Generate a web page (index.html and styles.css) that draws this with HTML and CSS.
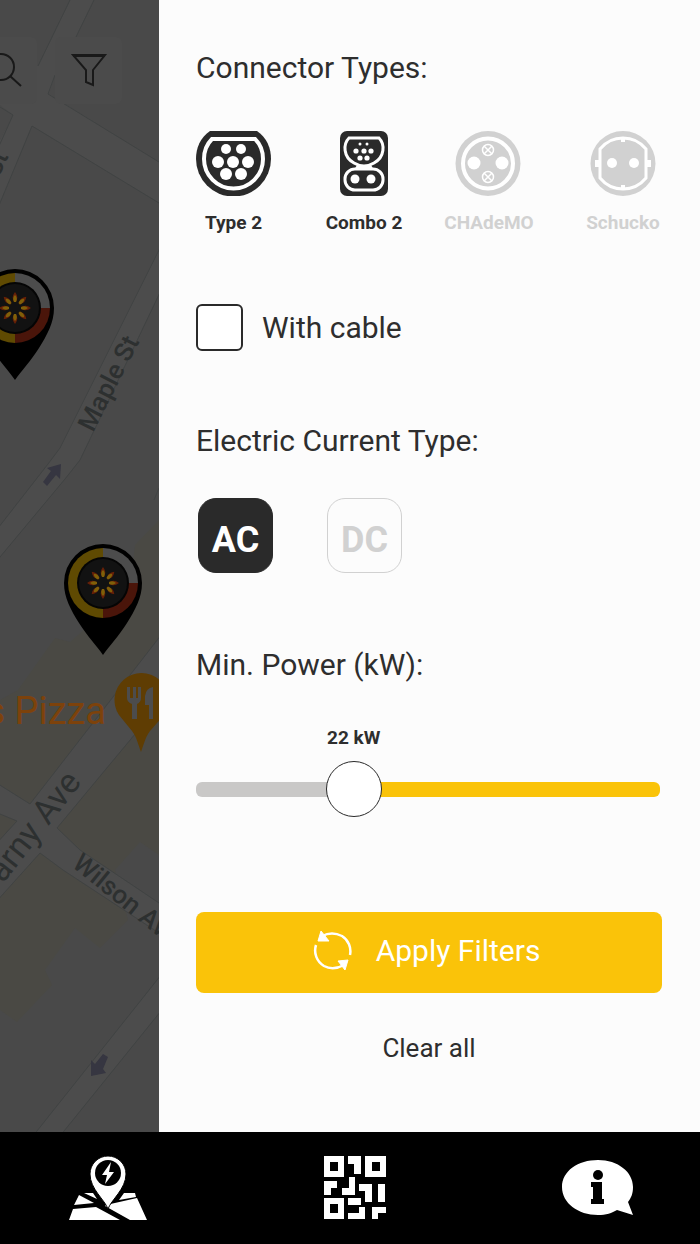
FILE: index.html
```html
<!DOCTYPE html>
<html lang="en">
<head>
<meta charset="utf-8">
<meta name="viewport" content="width=device-width, initial-scale=1">
<title>Charging station filters</title>
<link rel="stylesheet" href="styles.css">
</head>
<body>
<div class="app">
  <main class="main">
    <section class="map" aria-label="Map">
      <svg class="map-canvas" viewBox="0 0 159 1132" preserveAspectRatio="xMinYMin slice">
        <defs>
          <g id="petal"><path d="M0-16Q3-12 2-9L1-6H-1L-2-9Q-3-12 0-16Z" fill="#672007"/><path d="M0-13Q3-10 1-6H-1Q-3-10 0-13Z" fill="#806009"/></g>
          <g id="station">
            <path d="M0 72C-7 62-15 54-24 40C-32 27-39 15-39 0A39 39 0 0 1 39 0C39 15 32 27 24 40C15 54 7 62 0 72Z" fill="#000"/>
            <path d="M0-35A35 35 0 0 0 0 35Z" fill="#5f4a02"/>
            <path d="M0 35A35 35 0 0 0 35 0H0Z" fill="#4a150a"/>
            <path d="M0-35A35 35 0 0 1 35 0H0Z" fill="#4c4c4c"/>
            <circle r="26" fill="#050505"/><circle r="24" fill="#121212"/>
            <use href="#petal"/><use href="#petal" transform="rotate(45)"/><use href="#petal" transform="rotate(90)"/><use href="#petal" transform="rotate(135)"/><use href="#petal" transform="rotate(180)"/><use href="#petal" transform="rotate(225)"/><use href="#petal" transform="rotate(270)"/><use href="#petal" transform="rotate(315)"/>
          </g>
        </defs>
        <rect width="159" height="1132" fill="#494949"/>
        <path d="M159 520L135 545L130 590L70 642L55 638L18 690L0 700V1010L17 1022L52 985L45 970L75 928L100 948L128 920L115 870L140 842L159 855Z" fill="#4a4944"/>
        <g fill="#4c4c4c" stroke="#404343">
          <path d="M70 0L38 66L0 50V105L13 115L-5 150V215L32 126L159 203V162L49 94L55 75L76 37L94 0Z" stroke="none"/>
          <path fill="none" d="M70 0L38 66M94 0L76 37M55 75L48 94L159 162M0 107L13 115L-5 155M-5 215L32 126L159 203M159 488L154 500"/>
          <path d="M165 238L60 448L48 464L-5 532V563L65 479L80 460L165 282Z"/>
          <path d="M165 630L30 804L-5 782V812L17 821L-5 845V903L40 853L63 870L165 937V907L80 850L57 828L165 698Z"/>
          <path d="M165 970L33 1136H60L165 1006Z"/>
        </g>
        <g class="map-label">
          <text x="-11" y="197" transform="rotate(-64 -11 197)">n St</text>
          <text x="93" y="433" transform="rotate(-63 93 433)">Maple St</text>
          <text class="map-label-large" x="3" y="884" transform="rotate(-52 3 884)">arny Ave</text>
          <text x="71" y="866" transform="rotate(39 71 866)">Wilson Ave</text>
        </g>
        <g fill="#363641">
          <path d="M43 482L51 471L47 468L61 464L60 479L56 475L47 486Z"/>
          <path d="M108 1057L103 1069L106 1073L91 1076L91 1060L95 1064L103 1054Z"/>
        </g>
        <text class="map-place" x="106" y="724">s Pizza</text>
        <path d="M141 752C138 744 137 738 132 731L119 715A27 27 0 1 1 164 715L150 731C145 738 144 744 141 752Z" fill="#5f3d03"/>
        <path d="M127 687H130V698H133V687H136V698H138V687H141V698Q141 702 137 704V719H132V704Q127 702 127 698ZM153 687V719H149V705H145V696Q146 688 153 687Z" fill="#4c4c4c"/>
        <use href="#station" transform="translate(15 308)"/>
        <use href="#station" transform="translate(103 583)"/>
      </svg>
      <div class="map-tools">
        <button class="map-button" type="button" aria-label="Search"><svg viewBox="0 0 67 67" fill="none" stroke="#191919" stroke-width="2"><circle cx="31" cy="30" r="13"/><path d="M40 39L51 49"/></svg></button>
        <button class="map-button" type="button" aria-label="Filter"><svg viewBox="0 0 67 67" fill="none" stroke="#191919" stroke-width="2"><path d="M18 18H50L38 33V48L31 45V33Z"/><path d="M18 19H50"/></svg></button>
      </div>
    </section>

    <form class="panel">
      <h2 class="heading">Connector Types:</h2>
      <div class="connectors">
        <button class="connector" type="button" aria-pressed="true">
          <svg class="connector-icon" viewBox="0 0 75 65">
            <path d="M14 0H61C71 7 75 17 75 28A37 37 0 0 1 0 28C0 17 4 7 14 0Z" fill="#2a2a2a"/>
            <path d="M16 8H59Q67 16 67 28A29 29 0 0 1 8 28Q8 16 16 8Z" fill="none" stroke="#fff" stroke-width="4"/>
            <g fill="#fff"><circle cx="30" cy="18" r="5"/><circle cx="45" cy="18" r="5"/><circle cx="22" cy="31" r="6"/><circle cx="37" cy="31" r="6"/><circle cx="52" cy="31" r="6"/><circle cx="30" cy="43" r="6"/><circle cx="45" cy="43" r="6"/></g>
          </svg>
          <span>Type 2</span>
        </button>
        <button class="connector" type="button" aria-pressed="true">
          <svg class="connector-icon" viewBox="0 0 75 65">
            <rect x="13" width="48" height="65" rx="7" fill="#2a2a2a"/>
            <g fill="none" stroke="#fff" stroke-width="3"><path d="M22 7H52C58 13 58 26 47 32Q37 38 27 32C16 26 16 13 22 7Z"/><rect x="18" y="38" width="38" height="21" rx="10"/></g>
            <path d="M30 34H44L47 39H27Z" fill="#fff"/>
            <g fill="#fff"><circle cx="33" cy="13" r="1.500"/><circle cx="40" cy="13" r="1.500"/><circle cx="29" cy="20" r="2.600"/><circle cx="37" cy="20" r="2.600"/><circle cx="44" cy="20" r="2.600"/><circle cx="33" cy="27" r="2.600"/><circle cx="40" cy="27" r="2.600"/><circle cx="28" cy="48" r="4.500"/><circle cx="44" cy="48" r="4.500"/></g>
          </svg>
          <span>Combo 2</span>
        </button>
        <button class="connector" type="button" aria-pressed="false">
          <svg class="connector-icon" viewBox="0 0 75 65">
            <circle cx="36" cy="32.500" r="32.500" fill="#d1d1d1"/>
            <circle cx="36" cy="32.500" r="25" fill="none" stroke="#fff" stroke-width="4"/>
            <g fill="#fff"><circle cx="22" cy="32" r="6.500"/><circle cx="50" cy="32" r="6.500"/></g>
            <g fill="none" stroke="#fff" stroke-width="1.500"><circle cx="36" cy="19" r="5.500"/><circle cx="36" cy="46" r="5.500"/><path d="M32 15L40 23M40 15L32 23M32 42L40 50M40 42L32 50"/></g>
          </svg>
          <span>CHAdeMO</span>
        </button>
        <button class="connector" type="button" aria-pressed="false">
          <svg class="connector-icon" viewBox="0 0 75 65">
            <circle cx="37" cy="32.500" r="32.500" fill="#d1d1d1"/>
            <path d="M14 18Q23 7 37 7T60 18V47Q51 58 37 58T14 47Z" fill="none" stroke="#fff" stroke-width="3"/>
            <path d="M9 29H14V36H9ZM60 29H65V36H60ZM35 6H39V11H35ZM35 54H39V59H35Z" fill="#fff"/>
            <g fill="#fff"><circle cx="26" cy="32" r="5"/><circle cx="48" cy="32" r="5"/></g>
          </svg>
          <span>Schucko</span>
        </button>
      </div>

      <label class="cable"><input class="cable-box" type="checkbox"><span>With cable</span></label>

      <h2 class="heading">Electric Current Type:</h2>
      <div class="currents">
        <button class="current" type="button" aria-pressed="true">AC</button>
        <button class="current" type="button" aria-pressed="false">DC</button>
      </div>

      <label class="heading" for="power">Min. Power (kW):</label>
      <div class="power">
        <output class="power-value" for="power" style="width: 68%">22 kW</output>
        <input class="power-range" id="power" type="range" min="0" max="69" value="22">
      </div>

      <button class="apply" type="submit">
        <svg class="apply-icon" viewBox="0 0 40 42" fill="none" stroke="#fff" stroke-width="2.500"><path d="M9 6Q19 1 29 6A18 18 0 0 1 37 25M31 35Q20 41 11 36A18 18 0 0 1 3 15"/><path d="M5 11L8 1L16 11ZM35 30L32 40L25 31Z" fill="#fff" stroke-width="1"/></svg>
        <span>Apply Filters</span>
      </button>
      <button class="clear" type="reset">Clear all</button>
    </form>
  </main>

  <nav class="nav" aria-label="Main">
    <a href="#map" aria-label="Map">
      <svg width="78" height="65" viewBox="0 0 78 65" fill="#fff">
        <path d="M0 64L4 53L27 51L51 64ZM5 49L10 39L25 47ZM15 37H24L28 43ZM37 49L68 42L78 64H61L36 50ZM50 44L55 37H66L67 41Z"/>
        <path d="M39 53C36 44 21 33 21 18A18 18 0 0 1 57 18C57 33 42 44 39 53Z" stroke="#000" stroke-width="1"/>
        <circle cx="39" cy="17" r="13" fill="#000"/><path d="M42 6L33 19H38L36 28L45 16H40Z"/>
      </svg>
    </a>
    <a href="#scan" aria-label="Scan code">
      <svg width="64" height="64" viewBox="0 0 64 64" fill="#fff">
        <path fill-rule="evenodd" d="M1 0H21V21H1ZM7 6V15H15V6ZM42 0H63V21H42ZM49 6V15H57V6ZM1 42H21V63H1ZM7 48V57H15V48Z"/>
        <path d="M25 0H38V18H31V8H25ZM1 25H14V32H8V39H1ZM26 21H32V39H19V32H26ZM36 28H49V46H42V35H36ZM55 28H62V46H55ZM25 42H38V49H25ZM36 51H42V63H25V57H36ZM49 51H63V57H55V63H49Z"/>
      </svg>
    </a>
    <a href="#info" aria-label="Information">
      <svg width="72" height="56" viewBox="0 0 72 56">
        <path d="M36 0C56 0 71 12 71 27C71 34 69 38 66 42L71 55L55 50C50 53 44 55 36 55C16 55 0 43 0 27S16 0 36 0Z" fill="#fff"/>
        <circle cx="36" cy="15" r="5"/><path d="M29 22H40V39H42V44H29V39H31V27H29Z"/>
      </svg>
    </a>
  </nav>
</div>
</body>
</html>
```

FILE: styles.css
```css
* {
  box-sizing: border-box;
}

body {
  margin: 0;
  background: #000;
  color: #2e2e2e;
  font-family: Roboto, "Liberation Sans", sans-serif;
}

button {
  margin: 0;
  padding: 0;
  border: 0;
  background: none;
  color: inherit;
  font: inherit;
  cursor: pointer;
}

svg {
  display: block;
}

.app {
  display: flex;
  flex-direction: column;
  min-height: 100vh;
}

.main {
  display: grid;
  grid-template-columns: 159fr 541fr;
  flex: 1;
}

/* Map behind the open filter panel */
.map {
  position: relative;
  overflow: hidden;
  background: #494949;
}

.map-canvas {
  position: absolute;
  width: 100%;
  height: 100%;
}

.map-label {
  fill: #2d3030;
  font-size: 26px;
  font-weight: 500;
}

.map-label-large {
  font-size: 34px;
  font-weight: 400;
}

.map-place {
  fill: #7d420b;
  font-size: 38px;
  text-anchor: end;
}

.map-tools {
  position: absolute;
  top: 37px;
  left: -30px;
  display: flex;
  gap: 18px;
}

.map-button {
  width: 67px;
  height: 67px;
  border-radius: 6px;
  background: #4b4b4b;
}

/* Filter panel */
.panel {
  display: flex;
  flex-direction: column;
  padding: 50px 38px 66px 37px;
  background: #fcfcfc;
}

.heading {
  margin: 0;
  font-size: 30px;
  font-weight: 400;
  line-height: 36px;
}

.connectors {
  display: grid;
  grid-template-columns: 129fr 132fr 118fr 150fr;
  margin: 45px -36px 69px -27px;
}

.connector {
  display: flex;
  flex-direction: column;
  align-items: center;
  gap: 15px;
  font-size: 19px;
  font-weight: 700;
  line-height: 24px;
}

.connector[aria-pressed="false"] {
  color: #d1d1d1;
}

.connector-icon {
  width: 75px;
  height: 65px;
}

.cable {
  display: flex;
  align-items: center;
  gap: 19px;
  margin-bottom: 72px;
  font-size: 30px;
  line-height: 36px;
}

.cable-box {
  width: 47px;
  height: 47px;
  margin: 0;
  border: 2px solid #2a2a2a;
  border-radius: 6px;
  background: #fff;
  appearance: none;
}

.cable-box:checked {
  background: #2a2a2a;
}

.currents {
  display: flex;
  gap: 54px;
  margin: 39px 2px 74px;
}

.current {
  width: 75px;
  height: 75px;
  padding-top: 8px;
  border: 1px solid #d1d1d1;
  border-radius: 18px;
  color: #d1d1d1;
  font-size: 36px;
  font-weight: 700;
}

.current[aria-pressed="true"] {
  border-color: #2a2a2a;
  background: #2a2a2a;
  color: #fff;
}

.power {
  display: flex;
  flex-direction: column;
  gap: 12px;
  margin: 43px 2px 95px 0;
}

.power-value {
  font-size: 19px;
  font-weight: 700;
  line-height: 24px;
  text-align: center;
}

.power-range {
  width: 100%;
  height: 55px;
  margin: 0;
  background: none;
  appearance: none;
}

.power-range::-webkit-slider-runnable-track {
  height: 15px;
  border-radius: 6px;
  background: linear-gradient(to right, #c9c8c7 34%, #fac309 34%);
}

.power-range::-webkit-slider-thumb {
  width: 56px;
  height: 56px;
  margin-top: -21px;
  border: 1px solid #2a2a2a;
  border-radius: 50%;
  background: #fff;
  appearance: none;
}

.apply {
  display: flex;
  align-items: center;
  justify-content: center;
  gap: 23px;
  height: 81px;
  margin-bottom: 37px;
  padding: 0 5px 4px 0;
  border-radius: 8px;
  background: #fac309;
  color: #fff;
  font-size: 30px;
}

.apply-icon {
  width: 40px;
  height: 42px;
}

.clear {
  align-self: center;
  font-size: 26px;
  line-height: 36px;
}

/* Bottom navigation */
.nav {
  display: flex;
  align-items: center;
  justify-content: space-between;
  height: 112px;
  padding: 0 66px 0 69px;
  background: #000;
}
```
